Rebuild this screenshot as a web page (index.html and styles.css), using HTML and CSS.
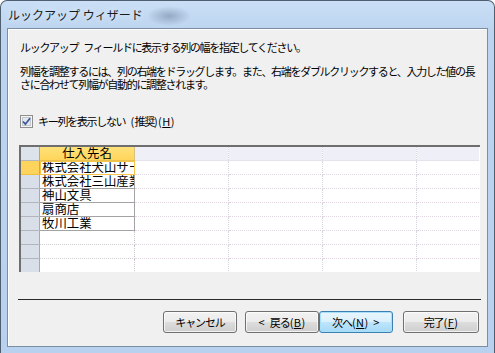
FILE: index.html
```html
<!DOCTYPE html>
<html lang="ja">
<head>
<meta charset="UTF-8">
<title>ルックアップ ウィザード</title>
<link rel="stylesheet" href="styles.css">
</head>
<body>
<div class="window">
    <div class="titlebar">
        <span class="title">ルックアップ ウィザード</span>
    </div>
    <div class="client">
        <p class="lead">ルックアップ フィールドに表示する列の幅を指定してください。</p>
        <p class="note">列幅を調整するには、列の右端をドラッグします。また、右端をダブルクリックすると、入力した値の長<br>さに合わせて列幅が自動的に調整されます。</p>

        <label class="check-row">
            <svg class="checkbox" width="13" height="13" viewBox="0 0 13 13">
                <rect x="0.5" y="0.5" width="12" height="12" fill="#f4f4f4" stroke="#8f8f8f"/>
                <rect x="2.5" y="2.5" width="8" height="8" fill="#e4e7ec" stroke="#c3c8d0"/>
                <path d="M3 6.5 L5.4 9.2 L10 3.2" fill="none" stroke="#3d5a98" stroke-width="1.8"/>
            </svg>
            <span>キー列を表示しない <span class="an">(</span>推奨<span class="an">)(<u>H</u>)</span></span>
        </label>

        <div class="grid">
            <table id="lookupGrid">
                <thead>
                    <tr>
                        <th class="sel"></th>
                        <th class="col-main">仕入先名</th>
                        <th></th>
                        <th></th>
                        <th></th>
                        <th class="col-last"></th>
                    </tr>
                </thead>
                <tbody>
                    <!-- rows are filled in by script.js -->
                </tbody>
            </table>
        </div>

        <div class="separator"></div>

        <div class="buttons">
            <button class="btn">キャンセル</button>
            <div class="btn-pair">
                <button class="btn"><span class="an">&lt; </span>戻る<span class="an">(<u>B</u>)</span></button>
                <button class="btn default">次へ<span class="an">(<u>N</u>) &gt;</span></button>
            </div>
            <button class="btn finish">完了<span class="an">(<u>F</u>)</span></button>
        </div>
    </div>
</div>
<script src="script.js"></script>
</body>
</html>
```

FILE: script.js
```js
document.addEventListener('DOMContentLoaded', function() {
    const suppliers = [
        '株式会社犬山サービス',
        '株式会社三山産業',
        '神山文具',
        '扇商店',
        '牧川工業',
        '',
        '',
        ''
    ];
    const body = document.getElementById('lookupGrid').getElementsByTagName('tbody')[0];

    suppliers.forEach((name, index) => {
        const row = body.insertRow();
        if (index === 0) row.classList.add('current');

        const selCell = row.insertCell();
        selCell.classList.add('sel');

        const nameCell = row.insertCell();
        nameCell.classList.add('col-main');
        if (index >= 5) nameCell.classList.add('empty');
        const text = document.createElement('div');
        text.classList.add('cell-text');
        text.textContent = name;
        nameCell.appendChild(text);

        for (let i = 0; i < 4; i++) {
            const cell = row.insertCell();
            if (i === 3) cell.classList.add('col-last');
        }
    });
});
```

FILE: styles.css
```css
body {
    margin: 0;
    font-family: "Noto Sans CJK JP", sans-serif;
    font-size: 11px;
    color: #000;
    background: #ffffff;
}

.window {
    width: 493px;
    height: 352px;
    border: 1px solid #4f5f70;
    border-bottom: none;
    border-radius: 7px 7px 0 0;
    background:
        radial-gradient(ellipse 22px 10px at 168px 15px, rgba(110, 130, 160, 0.55), rgba(110, 130, 160, 0)),
        linear-gradient(#cadff6, #bcd4ef 30px, #b8d1ee);
    display: flex;
    flex-direction: column;
}

.titlebar {
    height: 27px;
    display: flex;
    align-items: center;
    padding-left: 7px;
}

.title {
    font-size: 12px;
    color: #1a1a1a;
    text-shadow: 0 0 6px #eef5fd;
    margin-top: -1px;
}

.client {
    margin: 0 6px;
    width: 479px;
    height: 317px;
    border: 1px solid #7c8ea3;
    box-shadow: inset 1px 1px 0 #ffffff;
    background: #f0f0f0;
    display: flex;
    flex-direction: column;
    letter-spacing: -1.3px;
    word-spacing: 4px;
}

/* ascii bits keep their normal spacing */
.an {
    letter-spacing: 0.4px;
    word-spacing: 2px;
}

p {
    margin: 0;
    white-space: nowrap;
}

.lead {
    margin-top: 11px;
    padding-left: 12px;
    line-height: 14px;
}

.note {
    margin-top: 11px;
    padding-left: 12px;
    line-height: 13px;
}

.check-row {
    margin-top: 23px;
    padding-left: 12px;
    height: 14px;
    display: flex;
    align-items: center;
    gap: 5px;
    line-height: 14px;
}

.checkbox {
    flex: none;
}

/* data grid */
.grid {
    margin: 17px 0 0 11px;
    width: 461px;
    height: 127px;
    overflow: hidden;
    border-top: 2px solid #6e6e6e;
    border-left: 2px solid #6e6e6e;
    box-sizing: border-box;
    background: #ffffff;
    letter-spacing: 0;
    word-spacing: 0;
}

.grid table {
    border-collapse: collapse;
    table-layout: fixed;
    font-size: 12.4px;
    line-height: 13px;
}

.grid th, .grid td {
    padding: 0;
    width: 93px;
    border-right: 1px dotted #d6d6de;
    border-bottom: 1px dotted #e2d6e2;
    overflow: hidden;
    white-space: nowrap;
}

.grid th {
    height: 12px;
    font-weight: normal;
    background: #eff0f7;
    border-bottom: 1px solid #e6e3ef;
}

.grid td {
    height: 13px;
}

.grid .sel {
    width: 18px;
    background: #d8dfe8;
    border-right: 1px solid #a8a8b0;
    border-bottom: 1px solid #b4b4bc;
}

.grid th.sel {
    background: #dde3ea;
}

.grid .col-last {
    width: 62px;
    border-right: none;
}

.grid th.col-main {
    background: linear-gradient(#ffe17a, #ffd45a);
    border-right: 1px solid #d8c080;
    border-bottom: 1px solid #e8c050;
    text-align: center;
}

.grid td.col-main {
    border-right: 1px solid #a3a3a3;
    border-bottom: 1px solid #a3a3a3;
}

.grid td.col-main.empty {
    border-right: 1px dotted #c8c8c8;
    border-bottom: 1px dotted #d0d0d0;
}

.cell-text {
    width: 92px;
    padding-left: 2px;
    overflow: hidden;
    white-space: nowrap;
}

.grid tr.current .sel {
    background: #ffd45c;
    border-bottom-color: #f0c040;
}

.grid tr.current td.col-main {
    background: #ffffff;
    outline: 1px solid #f6c64c;
    outline-offset: -1px;
}

.separator {
    margin: 27px 0 0 10px;
    width: 463px;
    height: 1px;
    background: #2a2a2a;
}

/* buttons */
.buttons {
    margin-top: 11px;
    padding-left: 155px;
    display: flex;
    align-items: center;
    height: 22px;
}

.btn-pair {
    display: flex;
    margin-left: 8px;
}

.btn {
    width: 74px;
    height: 22px;
    padding: 0;
    font-family: "Noto Sans CJK JP", sans-serif;
    font-size: 11px;
    letter-spacing: -1.1px;
    word-spacing: 3px;
    color: #000;
    border: 1px solid #707070;
    border-radius: 3px;
    background: linear-gradient(#f2f2f2, #ebebeb 50%, #dddddd 50%, #cfcfcf);
    box-shadow: inset 0 0 0 1px rgba(255, 255, 255, 0.7);
}

.btn.default {
    border-color: #3c7fb1;
    box-shadow: inset 0 0 0 1px #a6e0fb;
    background: linear-gradient(#eaf6fd, #d9f0fc 50%, #bee6fd 50%, #a7d9f5);
}

.btn.finish {
    width: 76px;
    margin-left: 10px;
}
```
